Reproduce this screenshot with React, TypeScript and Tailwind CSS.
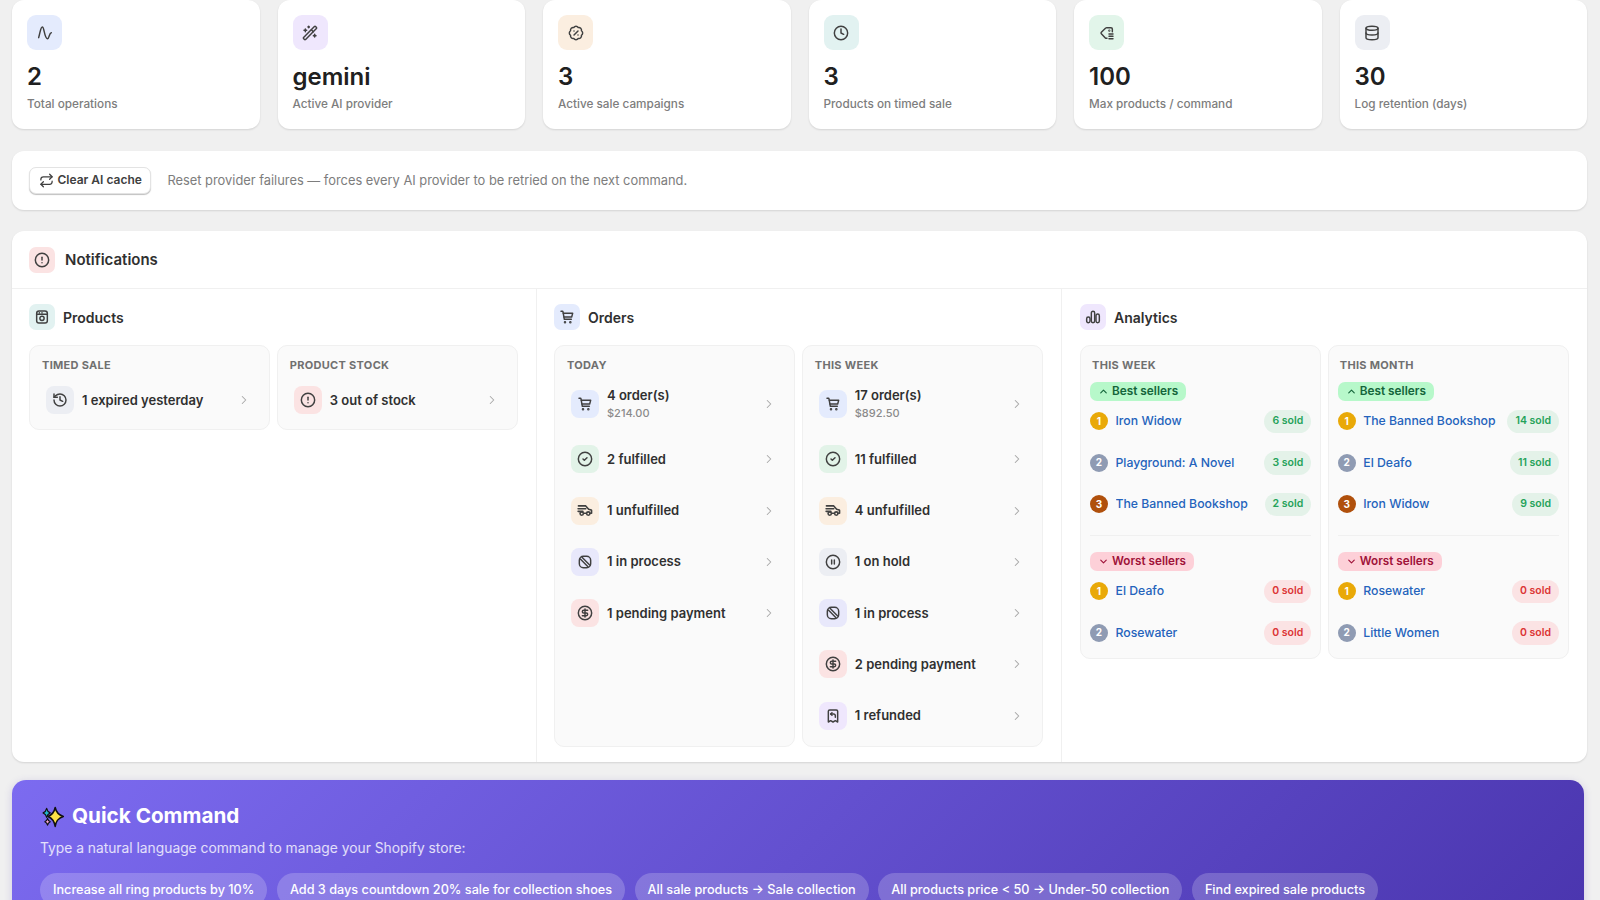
import React from 'react';
import {
  BadgePercent,
  ChevronDown,
  ChevronRight,
  ChevronUp,
  CircleAlert,
  CircleCheck,
  CircleDollarSign,
  CirclePause,
  Clock,
  Database,
  History,
  Repeat,
  WandSparkles,
} from 'lucide-react';

type IconType = React.ComponentType<{ className?: string; strokeWidth?: number }>;

const PulseIcon: IconType = ({ className, strokeWidth = 2 }) => (
  <svg viewBox="0 0 24 24" fill="none" stroke="currentColor" strokeWidth={strokeWidth} strokeLinecap="round" strokeLinejoin="round" className={className}>
    <path d="M2.500 19C5 10 5.500 3 8 3c3 0 3 17 7.500 17.500 3 .5 2.500-8.500 6-9" />
  </svg>
);

const TagListIcon: IconType = ({ className, strokeWidth = 2 }) => (
  <svg viewBox="0 0 24 24" fill="none" stroke="currentColor" strokeWidth={strokeWidth} strokeLinecap="round" strokeLinejoin="round" className={className}>
    <path d="M20 10V6a2 2 0 0 0-2-2h-6.500a2 2 0 0 0-1.400.6L3.500 11a1.500 1.500 0 0 0 0 2.100l6 6.400a2 2 0 0 0 1.500.5h1" />
    <path d="M15 13.500h6M15 17h6M15 20.500h6" />
    <circle cx="15.500" cy="8.500" r="0.600" />
  </svg>
);

const ProductIcon: IconType = ({ className, strokeWidth = 2 }) => (
  <svg viewBox="0 0 24 24" fill="none" stroke="currentColor" strokeWidth={strokeWidth} strokeLinecap="round" strokeLinejoin="round" className={className}>
    <rect x="4" y="3" width="16" height="18" rx="3.500" />
    <path d="M4 8h16M8 5.500h.01M12 5.500h.01" />
    <circle cx="12" cy="14" r="3.200" />
  </svg>
);

const CartIcon: IconType = ({ className, strokeWidth = 2 }) => (
  <svg viewBox="0 0 24 24" fill="none" stroke="currentColor" strokeWidth={strokeWidth} strokeLinecap="round" strokeLinejoin="round" className={className}>
    <path d="M3 3.500h2a1 1 0 0 1 1 .8L8 15.500h10.500" />
    <path d="M6.500 6.500H20.500l-1.500 5.500H7.500" />
    <circle cx="9" cy="19.800" r="0.800" />
    <circle cx="17" cy="19.800" r="0.800" />
  </svg>
);

const TruckIcon: IconType = ({ className, strokeWidth = 2 }) => (
  <svg viewBox="1 3 22 22" fill="none" stroke="currentColor" strokeWidth={strokeWidth} strokeLinecap="round" strokeLinejoin="round" className={className}>
    <path d="M3 7h10l4 4.500 3.500 1a1 1 0 0 1 .5 1V17h-2" />
    <path d="M2.500 11H13M2.500 14.500H9M13.500 17h-3" />
    <circle cx="7.500" cy="17.500" r="2.300" />
    <circle cx="16.500" cy="17.500" r="2.300" />
  </svg>
);

const StripedIcon: IconType = ({ className, strokeWidth = 2 }) => (
  <svg viewBox="0 0 24 24" fill="none" stroke="currentColor" strokeWidth={strokeWidth} strokeLinecap="round" strokeLinejoin="round" className={className}>
    <rect x="3.500" y="3.500" width="17" height="17" rx="6" />
    <path d="M7.500 5 19 16.500M5 7.500 16.500 19" />
  </svg>
);

const RefundIcon: IconType = ({ className, strokeWidth = 2 }) => (
  <svg viewBox="0 0 24 24" fill="none" stroke="currentColor" strokeWidth={strokeWidth} strokeLinecap="round" strokeLinejoin="round" className={className}>
    <path d="M5 5a2 2 0 0 1 2-2h10a2 2 0 0 1 2 2v16l-3.500-2-3.500 2-3.500-2L5 21z" />
    <path d="M10.500 7 8.500 9l2 2" />
    <path d="M8.500 9H13a2.500 2.500 0 0 1 2.500 2.500V14" />
  </svg>
);

const BarsIcon: IconType = ({ className, strokeWidth = 2 }) => (
  <svg viewBox="0 0 24 24" fill="none" stroke="currentColor" strokeWidth={strokeWidth} strokeLinecap="round" strokeLinejoin="round" className={className}>
    <rect x="2.500" y="12" width="5" height="8.500" rx="2.500" />
    <rect x="9.500" y="3.500" width="5" height="17" rx="2.500" />
    <rect x="16.500" y="7.500" width="5" height="13" rx="2.500" />
  </svg>
);

const SparklesEmoji = () => (
  <svg viewBox="0 0 26 30" className="h-[27px] w-[25px]">
    <path d="M16 5c1 5 3 8 9 10-6 2-8 5-9 11-1-6-3-9-8-11 5-2 7-5 8-10z" fill="#fde047" stroke="#111" strokeWidth="1.700" strokeLinejoin="round" />
    <path d="M6.500 6c.5 2.500 1.500 4 4 5-2.500 1-3.500 2.500-4 5-.5-2.500-1.500-4-4-5 2.500-1 3.500-2.500 4-5z" fill="#22b8cf" stroke="#111" strokeWidth="1.300" strokeLinejoin="round" />
    <path d="M7.500 17c.4 2 1.200 3 3 3.800-1.800.8-2.600 1.800-3 3.800-.4-2-1.200-3-3-3.800 1.800-.8 2.600-1.800 3-3.800z" fill="#f9a8d4" stroke="#111" strokeWidth="1.300" strokeLinejoin="round" />
  </svg>
);

const stats: { icon: IconType; tint: string; value: string; label: string }[] = [
  { icon: PulseIcon, tint: 'bg-[#e4ebfd]', value: '2', label: 'Total operations' },
  { icon: WandSparkles, tint: 'bg-[#efe7fd]', value: 'gemini', label: 'Active AI provider' },
  { icon: BadgePercent, tint: 'bg-[#fbeee0]', value: '3', label: 'Active sale campaigns' },
  { icon: Clock, tint: 'bg-[#e2f2f1]', value: '3', label: 'Products on timed sale' },
  { icon: TagListIcon, tint: 'bg-[#e2f5ea]', value: '100', label: 'Max products / command' },
  { icon: Database, tint: 'bg-[#eceef3]', value: '30', label: 'Log retention (days)' },
];

type RowItem = { icon: IconType; tint: string; text: string; sub?: string };

const cart = { icon: CartIcon, tint: 'bg-[#e4ebfd]' };
const fulfilled = { icon: CircleCheck, tint: 'bg-[#e2f3e8]' };
const unfulfilled = { icon: TruckIcon, tint: 'bg-[#fbeee0]' };
const inProcess = { icon: StripedIcon, tint: 'bg-[#e8e8fb]' };
const pending = { icon: CircleDollarSign, tint: 'bg-[#fbe3e3]' };

const ordersToday: RowItem[] = [
  { ...cart, text: '4 order(s)', sub: '$214.00' },
  { ...fulfilled, text: '2 fulfilled' },
  { ...unfulfilled, text: '1 unfulfilled' },
  { ...inProcess, text: '1 in process' },
  { ...pending, text: '1 pending payment' },
];

const ordersWeek: RowItem[] = [
  { ...cart, text: '17 order(s)', sub: '$892.50' },
  { ...fulfilled, text: '11 fulfilled' },
  { ...unfulfilled, text: '4 unfulfilled' },
  { icon: CirclePause, tint: 'bg-[#eceef3]', text: '1 on hold' },
  { ...inProcess, text: '1 in process' },
  { ...pending, text: '2 pending payment' },
  { icon: RefundIcon, tint: 'bg-[#efe7fd]', text: '1 refunded' },
];

const weekBest = [
  { name: 'Iron Widow', sold: '6 sold' },
  { name: 'Playground: A Novel', sold: '3 sold' },
  { name: 'The Banned Bookshop', sold: '2 sold' },
];
const weekWorst = [
  { name: 'El Deafo', sold: '0 sold' },
  { name: 'Rosewater', sold: '0 sold' },
];
const monthBest = [
  { name: 'The Banned Bookshop', sold: '14 sold' },
  { name: 'El Deafo', sold: '11 sold' },
  { name: 'Iron Widow', sold: '9 sold' },
];
const monthWorst = [
  { name: 'Rosewater', sold: '0 sold' },
  { name: 'Little Women', sold: '0 sold' },
];

const commands = [
  'Increase all ring products by 10%',
  'Add 3 days countdown 20% sale for collection shoes',
  'All sale products → Sale collection',
  'All products price < 50 → Under-50 collection',
  'Find expired sale products',
];

const rankColors = ['bg-[#e9a908]', 'bg-[#8f9bb3]', 'bg-[#b0500c]'];

const TintIcon = ({ icon: Icon, tint, size }: { icon: IconType; tint: string; size: 'lg' | 'md' | 'sm' }) => {
  if (size === 'lg') {
    return (
      <div className={`flex h-[35px] w-[35px] items-center justify-center rounded-[9px] ${tint}`}>
        <Icon className="h-[16px] w-[16px] text-[#404040]" strokeWidth={2.200} />
      </div>
    );
  }
  if (size === 'md') {
    return (
      <div className={`flex h-[28px] w-[28px] shrink-0 items-center justify-center rounded-[8px] ${tint}`}>
        <Icon className="h-[16px] w-[16px] text-[#404040]" strokeWidth={2.200} />
      </div>
    );
  }
  return (
    <div className={`flex h-[26px] w-[26px] shrink-0 items-center justify-center rounded-[7px] ${tint}`}>
      <Icon className="h-[16px] w-[16px] text-[#404040]" strokeWidth={2.200} />
    </div>
  );
};

const SubCard = ({ label, children }: { label: string; children: React.ReactNode }) => (
  <div className="flex-1 rounded-[10px] border border-[#f0f0f0] bg-[#fafafa] px-[12px] pb-[7px] pt-[12px]">
    <p className="mb-[5px] text-[11px] font-bold uppercase leading-[15px] tracking-[0.3px] text-[#707070]">{label}</p>
    {children}
  </div>
);

const Row = ({ item }: { item: RowItem }) => (
  <div className="flex items-center gap-[8px] py-[8px] pl-[4px] pr-[6px]">
    <TintIcon icon={item.icon} tint={item.tint} size="md" />
    <div className="min-w-0 flex-1">
      <p className="text-[13px] font-semibold leading-[19px] text-[#303030]">{item.text}</p>
      {item.sub && <p className="text-[11px] font-medium leading-[17px] text-[#8a8a8a]">{item.sub}</p>}
    </div>
    <ChevronRight className="h-[14px] w-[14px] text-[#a8a8a8]" strokeWidth={1.800} />
  </div>
);

const RowList = ({ items }: { items: RowItem[] }) => (
  <div className="flex flex-col gap-[7.300px] pb-[1px]">
    {items.map((item) => (
      <Row key={item.text} item={item} />
    ))}
  </div>
);

const Seller = ({ rank, name, sold, worst }: { rank: number; name: string; sold: string; worst?: boolean }) => (
  <div className="flex items-center py-[9px]">
    <span className={`flex h-[18px] w-[18px] shrink-0 items-center justify-center rounded-full text-[10px] font-bold text-white ${rankColors[rank]}`}>
      {rank + 1}
    </span>
    <span className="ml-[7.500px] flex-1 truncate text-[12.250px] font-medium leading-[18px] text-[#2463bc]">{name}</span>
    <span
      className={
        worst
          ? 'flex h-[23.500px] items-center rounded-full bg-[#fbe3e4] px-[8px] text-[10.500px] font-semibold text-[#dc3535]'
          : 'flex h-[23.500px] items-center rounded-full bg-[#e4f2e9] px-[8px] text-[10.500px] font-semibold text-[#25a25a]'
      }
    >
      {sold}
    </span>
  </div>
);

const SellerCard = ({
  label,
  best,
  worst,
}: {
  label: string;
  best: { name: string; sold: string }[];
  worst: { name: string; sold: string }[];
}) => (
  <div className="flex-1 rounded-[10px] border border-[#f0f0f0] bg-[#fafafa] px-[9px] pb-[4px] pt-[12px]">
    <p className="mb-[9px] px-[2px] text-[11px] font-bold uppercase leading-[15px] tracking-[0.3px] text-[#707070]">{label}</p>
    <div className="mb-[-0.500px] flex h-[19px] w-fit items-center gap-[3px] rounded-[7px] bg-[#b7f8ca] px-[8px] text-[11.800px] font-semibold text-[#14653a]">
      <ChevronUp className="h-[11px] w-[11px]" strokeWidth={2.500} />
      Best sellers
    </div>
    {best.map((item, i) => (
      <Seller key={item.name} rank={i} name={item.name} sold={item.sold} />
    ))}
    <div className="mb-[16px] mt-[10px] border-t border-[#f0f0f0]" />
    <div className="mb-[-0.500px] flex h-[19px] w-fit items-center gap-[3px] rounded-[7px] bg-[#fdd0d8] px-[8px] text-[11.700px] font-semibold text-[#9f1239]">
      <ChevronDown className="h-[11px] w-[11px]" strokeWidth={2.500} />
      Worst sellers
    </div>
    {worst.map((item, i) => (
      <Seller key={item.name} rank={i} name={item.name} sold={item.sold} worst />
    ))}
  </div>
);

const SectionTitle = ({ icon, tint, title }: { icon: IconType; tint: string; title: string }) => (
  <div className="mb-[15px] flex items-center gap-[8px]">
    <TintIcon icon={icon} tint={tint} size="sm" />
    <h3 className="text-[14px] font-semibold text-[#303030]">{title}</h3>
  </div>
);

export default function App() {
  return (
    <div className="h-[900px] overflow-hidden bg-[#f0f0f0] pl-[12px] pr-[13px] font-['Inter',sans-serif]">
      <div className="flex gap-[18px]">
        {stats.map((stat) => (
          <div key={stat.label} className="h-[129px] flex-1 rounded-[12px] bg-white pl-[15px] pr-[16px] pt-[15px] shadow-[0_1px_2px_rgba(0,0,0,0.12)]">
            <TintIcon icon={stat.icon} tint={stat.tint} size="lg" />
            <p className="mt-[11px] text-[24px] font-semibold leading-[32px] text-[#202020]">{stat.value}</p>
            <p className="mt-[1.500px] text-[11.750px] font-medium leading-[18px] text-[#7d7d7d]">{stat.label}</p>
          </div>
        ))}
      </div>

      <div className="mt-[22px] flex h-[59px] items-center gap-[16px] rounded-[12px] bg-white px-[17px] shadow-[0_1px_2px_rgba(0,0,0,0.12)]">
        <button className="flex h-[27px] items-center gap-[4px] rounded-[7px] border border-[#e3e3e3] bg-white px-[8.500px] pb-[1px] text-[12px] font-semibold text-[#404040] shadow-[0_1px_1px_rgba(0,0,0,0.25)]">
          <Repeat className="h-[15px] w-[15px]" strokeWidth={2} />
          Clear AI cache
        </button>
        <p className="text-[12.870px] text-[#7d7d7d]">
          Reset provider failures — forces every AI provider to be retried on the next command.
        </p>
      </div>

      <div className="mt-[21px] h-[531px] rounded-[12px] bg-white shadow-[0_1px_2px_rgba(0,0,0,0.12)]">
        <div className="flex h-[58px] items-center gap-[10px] border-b border-[#f0f0f0] px-[17px]">
          <TintIcon icon={CircleAlert} tint="bg-[#fbe3e3]" size="sm" />
          <h2 className="mt-[1px] text-[15px] font-semibold text-[#303030]">Notifications</h2>
        </div>
        <div className="flex h-[473px]">
          <div className="w-[525px] shrink-0 border-r border-[#f0f0f0] pl-[17px] pr-[18px] pt-[15px]">
            <SectionTitle icon={ProductIcon} tint="bg-[#e2f2f1]" title="Products" />
            <div className="flex gap-[6.500px]">
              <SubCard label="Timed sale">
                <Row item={{ icon: History, tint: 'bg-[#eceef3]', text: '1 expired yesterday' }} />
              </SubCard>
              <SubCard label="Product stock">
                <Row item={{ icon: CircleAlert, tint: 'bg-[#fbe3e3]', text: '3 out of stock' }} />
              </SubCard>
            </div>
          </div>
          <div className="w-[525px] shrink-0 border-r border-[#f0f0f0] pl-[17px] pr-[18px] pt-[15px]">
            <SectionTitle icon={CartIcon} tint="bg-[#e4ebfd]" title="Orders" />
            <div className="flex gap-[6.500px]">
              <SubCard label="Today">
                <RowList items={ordersToday} />
              </SubCard>
              <SubCard label="This week">
                <RowList items={ordersWeek} />
              </SubCard>
            </div>
          </div>
          <div className="flex-1 px-[18px] pt-[15px]">
            <SectionTitle icon={BarsIcon} tint="bg-[#efe7fd]" title="Analytics" />
            <div className="flex gap-[6.500px]">
              <SellerCard label="This week" best={weekBest} worst={weekWorst} />
              <SellerCard label="This month" best={monthBest} worst={monthWorst} />
            </div>
          </div>
        </div>
      </div>

      <div className="mr-[3px] mt-[18px] h-[150px] rounded-[14px] bg-[linear-gradient(135deg,#7c6bf0,#4a35ae)] px-[28px] pt-[21px] shadow-[0_2px_8px_rgba(80,60,180,0.2)]">
        <div className="flex items-center gap-[7px]">
          <SparklesEmoji />
          <h2 className="text-[20.700px] font-bold leading-[30px] text-white">Quick Command</h2>
        </div>
        <p className="mt-[7px] text-[13.800px] leading-[20px] text-white/80">Type a natural language command to manage your Shopify store:</p>
        <div className="mt-[15px] flex gap-[9.500px]">
          {commands.map((command) => (
            <span key={command} className="flex h-[34px] items-center rounded-full bg-white/20 px-[13px] text-[12.700px] font-medium text-white">
              {command}
            </span>
          ))}
        </div>
      </div>
    </div>
  );
}
